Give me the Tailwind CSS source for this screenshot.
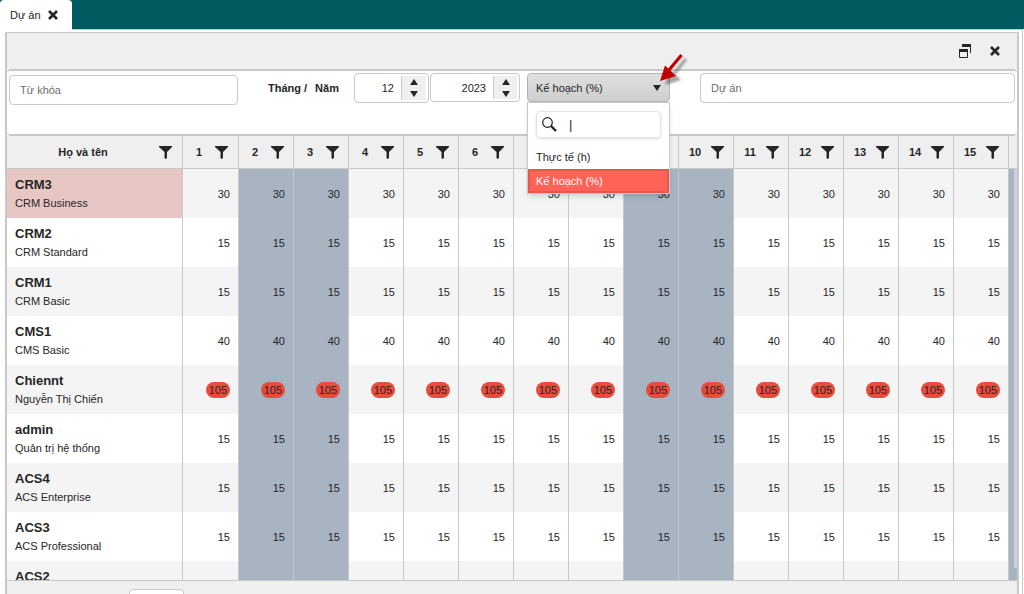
<!DOCTYPE html>
<html lang="vi">
<head>
<meta charset="utf-8">
<meta name="viewport" content="width=device-width, initial-scale=1">
<title>Dự án</title>
<script src="https://cdn.jsdelivr.net/npm/@tailwindcss/browser@4"></script>
</head>
<body class="h-screen overflow-hidden flex flex-col bg-white font-['Liberation_Sans',Arial,sans-serif] text-[11px] leading-4 text-[#262626]">
<svg class="hidden">
  <symbol id="funnel" viewBox="0 0 13 13"><path d="M0 0h13v1L8 6v6l-1.500 1L5.500 12V6L0 1z" fill="#262626"/></symbol>
  <symbol id="cross" viewBox="0 0 10 10"><path d="M1 1l8 8M9 1l-8 8" stroke="#262626" stroke-width="2.600" fill="none"/></symbol>
</svg>

<header class="h-[29px] shrink-0 bg-[#005a60] flex">
  <nav class="w-[72px] h-[30px] bg-white rounded-t flex items-center pl-[10px] gap-[7px] relative">
    <a href="#" class="whitespace-nowrap">Dự án</a>
    <button type="button" aria-label="Đóng thẻ"><svg class="block size-[10px]"><use href="#cross"/></svg></button>
  </nav>
</header>

<main class="flex-1 min-h-0 border-t border-r border-[#c8c8c8] mr-px pl-[5px] pr-[3px] pt-[2px] flex flex-col">
  <section class="flex-1 min-h-0 flex flex-col border-t border-x-2 border-[#c8c8c8]">
    <div class="h-9 shrink-0 bg-[#efefef] flex items-center justify-end gap-[19px] pr-[17px]">
      <button type="button" aria-label="Khôi phục"><svg class="block w-3 h-[14px]" viewBox="0 0 12 14" fill="none" stroke="#262626"><path d="M3 1.500h9" stroke-width="3"/><path d="M11.500 2v7" /><path d="M.5 5v8.500h8V5"/><path d="M0 6.500h9" stroke-width="3"/></svg></button>
      <button type="button" aria-label="Đóng"><svg class="block size-[10px]"><use href="#cross"/></svg></button>
    </div>

    <form class="h-[67px] shrink-0 border-y-2 border-[#c8c8c8] rounded flex items-start px-[2px] pt-[2px]">
      <input type="text" aria-label="Từ khóa" placeholder="Từ khóa" class="mt-[2px] w-[229px] h-[30px] border border-[#c8c8c8] rounded px-[10px] placeholder:text-[#6f6f6f] outline-none">
      <div class="ml-[30px] mt-[7px] w-[86px] flex gap-2 font-bold whitespace-nowrap">
        <label for="month">Tháng /</label><label for="year">Năm</label>
      </div>
      <div class="w-[75px] h-[30px] border border-[#c8c8c8] rounded flex p-[2px]">
        <input id="month" type="text" value="12" class="min-w-0 flex-1 text-right pr-[7px] outline-none">
        <div class="w-[25px] border-l border-[#c8c8c8] bg-[#efefef] flex flex-col items-center justify-center gap-[6px]">
          <button type="button" aria-label="Tăng tháng"><svg class="block w-2 h-[6px]" viewBox="0 0 8 6"><path d="M0 6l4-6 4 6z" fill="#262626"/></svg></button>
          <button type="button" aria-label="Giảm tháng"><svg class="block w-2 h-[6px]" viewBox="0 0 8 6"><path d="M0 0l4 6 4-6z" fill="#262626"/></svg></button>
        </div>
      </div>
      <div class="ml-px w-[90px] h-[29px] border border-[#c8c8c8] rounded flex p-[2px]">
        <input id="year" type="text" value="2023" class="min-w-0 flex-1 text-right pr-[7px] outline-none">
        <div class="w-6 border-l border-[#c8c8c8] bg-[#efefef] flex flex-col items-center justify-center gap-[6px]">
          <button type="button" aria-label="Tăng năm"><svg class="block w-2 h-[6px]" viewBox="0 0 8 6"><path d="M0 6l4-6 4 6z" fill="#262626"/></svg></button>
          <button type="button" aria-label="Giảm năm"><svg class="block w-2 h-[6px]" viewBox="0 0 8 6"><path d="M0 0l4 6 4-6z" fill="#262626"/></svg></button>
        </div>
      </div>
      <div class="relative ml-[7px] w-[143px] z-10">
        <button type="button" aria-haspopup="listbox" aria-expanded="true" class="w-full h-[29px] border border-[#b4b4b4] rounded bg-linear-to-b from-[#e0e0e0] to-[#cfcfcf] flex items-center justify-between pl-2 pr-2">
          <span>Kế hoạch (%)</span>
          <svg class="w-2 h-[6px]" viewBox="0 0 8 6"><path d="M0 0h8L4 6z" fill="#262626"/></svg>
        </button>
        <div class="absolute left-0 top-[29px] w-full bg-white border border-[#c8c8c8] shadow-md">
          <div class="mx-2 mt-2 mb-[7px] h-[27px] border border-[#e4e4e4] rounded shadow-sm flex items-center pl-[5px] gap-[12px]">
            <svg class="size-[15px] shrink-0" viewBox="0 0 15 15" fill="none" stroke="#262626"><circle cx="5.500" cy="5.500" r="4.800" stroke-width="1.200"/><path d="M9 9l5 5" stroke-width="2.400"/></svg>
            <input type="text" aria-label="Tìm" value="|" class="min-w-0 flex-1 outline-none text-[13px]">
          </div>
          <ul role="listbox" aria-label="Kiểu hiển thị">
            <li role="option" class="h-6 flex items-center pl-2">Thực tế (h)</li>
            <li role="option" aria-selected="true" class="h-6 flex items-center pl-[6px] bg-[#ff6358] border-2 border-[#e5564c] text-white">Kế hoạch (%)</li>
          </ul>
        </div>
        <svg class="absolute left-[128px] -top-5 w-9 h-10" viewBox="0 0 36 40"><g class="blur-[1px]" opacity=".35"><path d="M31 6L19 21" stroke="#000" stroke-width="3"/><path d="M10 32l5-15.500L26 27z"/></g><path d="M26.500 2L14 17" stroke="#c00000" stroke-width="3.200"/><path d="M5 28l5-15.500L21 23z" fill="#c00000"/></svg>
      </div>
      <input type="text" aria-label="Dự án" placeholder="Dự án" class="ml-[30px] flex-1 min-w-0 h-[30px] border border-[#c8c8c8] rounded px-[10px] placeholder:text-[#6f6f6f] outline-none">
    </form>

    <div class="relative flex-1 min-h-0 overflow-hidden">
      <table class="table-fixed w-[1057px] border-separate border-spacing-0">
        <thead><tr id="head" class="h-[33px] bg-[#efefef]"></tr></thead>
        <tbody id="rows"></tbody>
      </table>
      <div class="absolute right-0 top-[33px] bottom-3 w-[3px] rounded-b bg-[#c9d2de]"></div>
    </div>

    <footer class="h-[14px] shrink-0 border-t border-[#c8c8c8] bg-[#efefef] overflow-hidden pl-[122px] pt-2">
      <select aria-label="Số dòng" class="block appearance-none w-[55px] h-7 bg-white border border-[#c8c8c8] rounded"><option></option></select>
    </footer>
  </section>
</main>

<script>
const people = [
  ["CRM3", "CRM Business", 30],
  ["CRM2", "CRM Standard", 15],
  ["CRM1", "CRM Basic", 15],
  ["CMS1", "CMS Basic", 40],
  ["Chiennt", "Nguyễn Thị Chiến", 105],
  ["admin", "Quản trị hệ thống", 15],
  ["ACS4", "ACS Enterprise", 15],
  ["ACS3", "ACS Professional", 15],
  ["ACS2", "", ""],
];
const days = Array.from({ length: 15 }, (_, i) => i + 1);
const weekend = [2, 3, 9, 10];
const funnel = '<button type="button" aria-label="Lọc"><svg class="block size-[13px]"><use href="#funnel"/></svg></button>';

document.getElementById("head").innerHTML =
  '<th scope="col" class="w-[176px] p-0 border-r border-b border-[#c8c8c8]"><div class="flex items-center"><span class="w-[152px] text-center">Họ và tên</span>' + funnel + "</div></th>" +
  days.map(d => `<th scope="col" class="${d === 1 ? "w-[56px]" : "w-[55px]"} p-0 border-r border-b border-[#c8c8c8]"><div class="flex items-center"><span class="w-8 text-center">${d}</span>${funnel}</div></th>`).join("") +
  '<td class="w-[55px] p-0 border-b border-[#c8c8c8]"></td>';

document.getElementById("rows").innerHTML = people.map(([name, role, value], i) => {
  const rowBg = i % 2 ? "bg-white" : "bg-[#f4f4f4]";
  const content = value > 100 ? `<span class="inline-block rounded-full bg-[#e74c3c] px-[3px]">${value}</span>` : value;
  return `<tr class="h-[49px] ${rowBg}"><th scope="row" class="p-0 pl-2 text-left border-r border-[#c8c8c8] ${i === 0 ? "bg-[#e8c6c4]" : ""}"><div class="text-[13px] leading-[18px]">${name}</div><div class="h-[18px] font-normal leading-[18px]">${role}</div></th>` +
    days.map(d => `<td class="p-0 pr-2 text-right border-r border-[#c8c8c8] ${weekend.includes(d) ? "bg-[#a9b4c3]" : ""}">${content}</td>`).join("") +
    '<td class="p-0 bg-[#a9b4c3]"></td></tr>';
}).join("");
</script>
</body>
</html>
